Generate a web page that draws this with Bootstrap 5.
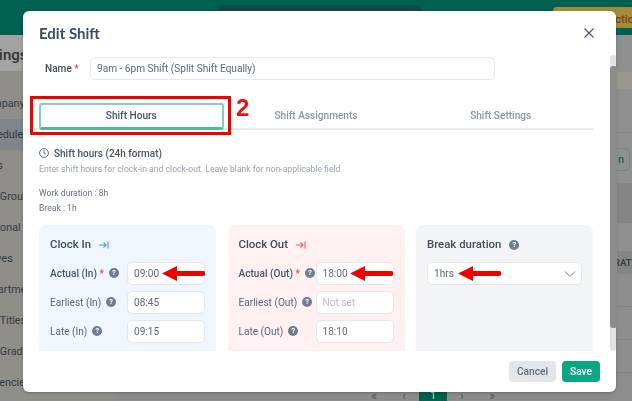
<!DOCTYPE html>
<html lang="en">
<head>
  <meta charset="UTF-8" />
  <meta name="viewport" content="width=device-width, initial-scale=1" />
  <title>Edit Shift</title>
  <link href="https://cdn.jsdelivr.net/npm/bootstrap@5.3.0/dist/css/bootstrap.min.css" rel="stylesheet">
  <style>
    html, body { height: 100%; overflow: hidden; }
    body { font-family: Roboto, "Liberation Sans", sans-serif; background: #8e8e8c; color: #3f4d5f; font-size: 10.1px; }

    /* page behind the modal */
    .page-wrap { width: 632px; height: 401px; overflow: hidden; }
    .top-bar { height: 35px; background: #00604f; padding-top: 7px; }
    .top-pill { width: 206px; height: 14px; margin-top: -2px; margin-left: 216px; background: #104a45; border-radius: 8px 8px 0 0; }
    .top-gold { width: 90px; height: 21px; background: #a28a3a; color: #8a3f10; font-size: 11.5px; font-weight: 500; border-radius: 4px 0 0 0; padding: 4px 0 0 62px; margin-left: 553px; margin-top: -12px; white-space: nowrap; overflow: hidden; }
    .page-body { height: 366px; }
    .side-col { width: 116px; background: #908e89; flex: none; overflow: hidden; }
    .side-head { height: 36px; background: #a3a3a3; font-size: 15px; font-weight: 500; color: #333; padding: 9px 0 0 0; margin-bottom: 17px; margin-left: -28px; width: 160px; white-space: nowrap; }
    .side-item { height: 31px; line-height: 31px; white-space: nowrap; font-size: 10.8px; color: #333b44; margin-left: -21px; width: 140px; padding-left: 0; }
    .side-item.sel { background: #7f858a; }
    .main-col { background: #8c8c8c; min-width: 0; color: #2f3a40; }
    .band-a { height: 37px; background: #8f8f8f; }
    .band-b { height: 17px; background: #9a9690; }
    .band-c { height: 44px; background: #8f8f8f; border-bottom: 1px solid #838383; }
    .band-d { height: 50px; background: #8f8f8f; padding: 15px 2px 0 0; }
    .outline-pill { width: 26px; height: 23px; border: 1px solid #5f9186; border-radius: 5px; margin-left: 488px; color: #1f5f52; font-weight: 500; font-size: 11px; text-align: left; padding-left: 13px; line-height: 21px; }
    .band-e { height: 40px; background: #858585; }
    .band-f { height: 28px; background: #8f8f8f; }
    .band-g { height: 23px; background: #858585; font-size: 9.5px; font-weight: 500; line-height: 23px; padding-left: 498px; white-space: nowrap; overflow: hidden; }
    .band-row { height: 33px; background: #8e8e8e; border-bottom: 1px solid #828282; }
    .pager { height: 10px; padding-left: 243px; color: #555; font-size: 13px; line-height: 9px; margin-top: 18px; }
    .pager span { width: 30px; text-align: center; }
    .pager .pager-on { width: 28px; background: #00604f; color: #9fb; font-size: 10px; }

    /* modal */
    .modal-holder { position: fixed; left: 23px; top: 11px; width: 593px; z-index: 10; }
    .shift-modal { height: 381px; border: 0; border-radius: 6px; background: #fff; position: relative; box-shadow: 0 1px 3px rgba(0,0,0,.25); }
    .shift-modal .modal-header { height: 43px; padding: 0 16px; border: 0; }
    .shift-title { font-family: Lato, "Liberation Sans", sans-serif; font-weight: 700; font-size: 15px; color: #3a4a5f; margin: 0; }
    .close-x { width: 10px; height: 10px; margin-right: 6px; margin-top: 0; }
    .shift-body { height: 297px; flex: none; overflow: hidden; padding: 3px 23px 0 16px; }
    .name-label { width: 51px; padding-left: 6px; font-weight: 500; font-size: 10.1px; color: #3f4d5f; flex: none; }
    .req { color: #e5484d; }
    .mini-input.form-control, .mini-input.form-select { height: 23px; min-height: 23px; font-size: 10.1px; padding: 0 6px; color: #5c6878; border: 1px solid #e6e8ec; border-radius: 5px; background-color: #fff; }
    .mini-input.form-select { background-image: url("data:image/svg+xml,%3csvg xmlns='http://www.w3.org/2000/svg' viewBox='0 0 12 6'%3e%3cpath fill='none' stroke='%236b7685' stroke-width='1' d='M1 .5l5 5 5-5'/%3e%3c/svg%3e"); background-size: 12px 6px; background-position: right 5px center; }
    .mini-input.form-control::placeholder { color: #b8bec7; }
    .name-box { width: 405px; flex: none; }
    .tab-wrap { margin-top: 23px; position: relative; }
    .shift-tabs { border-bottom: 2px solid #e8eaee; height: 27px; }
    .shift-tabs .nav-link { height: 27px; padding: 0; line-height: 25px; font-size: 10.1px; font-weight: 500; color: #8a95a5; border: 0; background: none; }
    .shift-tabs .nav-link.active { color: #46556a; border: 2px solid #7fd1bd; border-bottom: 3px solid #4fb79f; border-radius: 3px; background: #fff; line-height: 22px; }
    .red-box { position: absolute; left: -9px; top: -7px; width: 201px; height: 39px; border: 3px solid #f00000; pointer-events: none; }
    .red-two { position: absolute; left: 197px; top: -9px; color: #ee1111; font-family: "Liberation Sans", sans-serif; font-size: 24px; font-weight: 700; line-height: 28px; }
    .hours-head { margin-top: 16px; font-weight: 500; font-size: 10px; color: #46556a; gap: 5px; height: 14px; }
    .hours-sub { margin-top: 2px; font-size: 8.65px; color: #98a1ae; line-height: 14px; }
    .dur-line { font-size: 8.6px; color: #66717f; line-height: 15px; }
    .dur-first { margin-top: 10px; }
    .hour-cards { margin-top: 9px; display: grid; grid-template-columns: 177px 177px 177px; gap: 11.5px; }
    .hour-card { height: 140px; border-radius: 8px; padding: 12px 11px; }
    .card-in { background: #eff6fe; }
    .card-out { background: #fff0f2; }
    .card-brk { background: #f3f4f6; }
    .hour-head { height: 16px; font-size: 11.4px; font-weight: 500; color: #3f4d5f; gap: 8px; margin-bottom: 9px; }
    .hour-row { height: 23px; margin-bottom: 6px; font-size: 10.1px; color: #5a6678; justify-content: space-between; }
    .hour-row .strong-lab { font-weight: 500; color: #46556a; }
    .hour-lab { gap: 5px; white-space: nowrap; }
    .time-box { width: 78px; flex: none; position: relative; }
    .help-dot { display: inline-block; width: 10px; height: 10px; border-radius: 50%; background: #6f7d90; color: #fff; font-size: 7.5px; font-weight: 700; line-height: 10px; text-align: center; flex: none; }
    .red-arrow { position: absolute; top: 4px; width: 43px; height: 15px; }
    .shift-foot { height: 41px; padding: 0 16px 0 0; border: 0; gap: 6px; margin-top: 0; }
    .btn-cancel.btn { height: 21px; width: 47px; padding: 0; font-size: 10.2px; font-weight: 500; background: #e2e5e9; color: #5f6b7a; border: 0; border-radius: 4px; margin: 0; }
    .btn-save.btn { height: 21px; width: 38px; padding: 0; font-size: 10.2px; font-weight: 500; background: #0aa683; color: #fff; border: 0; border-radius: 4px; margin: 0; }
    .scroll-track { position: absolute; right: 0; top: 44px; width: 6px; height: 296px; background: #e3e3e3; border-radius: 3px; }
    .scroll-thumb { position: absolute; left: 587px; top: 55px; width: 7px; height: 262px; background: #8c8c8c; border-radius: 3px; }
  </style>
</head>
<body>

  <!-- page behind the modal -->
  <div class="page-wrap">
    <div class="top-bar">
      <div class="top-pill"></div>
      <div class="top-gold">ction</div>
    </div>
    <div class="page-body d-flex">
      <div class="side-col">
        <div class="side-head">Settings</div>
        <div class="side-item">Company</div>
        <div class="side-item sel">Schedules</div>
        <div class="side-item">Sites</div>
        <div class="side-item">Job Groups</div>
        <div class="side-item">Regional</div>
        <div class="side-item">Leaves</div>
        <div class="side-item">Departments</div>
        <div class="side-item">Job Titles</div>
        <div class="side-item">Job Grades</div>
        <div class="side-item">Currencies</div>
      </div>
      <div class="main-col flex-grow-1">
        <div class="band-a"></div>
        <div class="band-b"></div>
        <div class="band-c"></div>
        <div class="band-d"><div class="outline-pill">n</div></div>
        <div class="band-e"></div>
        <div class="band-f"></div>
        <div class="band-g">RATI</div>
        <div class="band-row"></div>
        <div class="band-row"></div>
        <div class="band-row"></div>
        <div class="pager d-flex">
          <span>&laquo;</span><span>&lsaquo;</span><span class="pager-on">1</span><span>&rsaquo;</span><span>&raquo;</span>
        </div>
      </div>
    </div>
  </div>

  <!-- modal -->
  <div class="modal-holder">
    <div class="modal-content shift-modal">
      <div class="modal-header justify-content-between">
        <h5 class="shift-title">Edit Shift</h5>
        <svg class="close-x" viewBox="0 0 10 10"><path d="M.5.5l9 9M9.5.5l-9 9" stroke="#46556a" stroke-width="1.1" fill="none"/></svg>
      </div>

      <div class="modal-body shift-body">
        <div class="d-flex align-items-center">
          <label class="name-label">Name <span class="req">*</span></label>
          <input class="form-control mini-input name-box" value="9am - 6pm Shift (Split Shift Equally)">
        </div>

        <div class="tab-wrap">
          <ul class="nav nav-justified shift-tabs">
            <li class="nav-item"><a class="nav-link active" href="#">Shift Hours</a></li>
            <li class="nav-item"><a class="nav-link" href="#">Shift Assignments</a></li>
            <li class="nav-item"><a class="nav-link" href="#">Shift Settings</a></li>
          </ul>
          <div class="red-box"></div>
          <div class="red-two">2</div>
        </div>

        <div class="hours-head d-flex align-items-center">
          <svg width="10" height="10" viewBox="0 0 10 10"><circle cx="5" cy="5" r="4.4" fill="none" stroke="#46556a" stroke-width=".9"/><path d="M5 2.4V5l1.8 1" fill="none" stroke="#46556a" stroke-width=".9"/></svg>
          Shift hours (24h format)
        </div>
        <div class="hours-sub">Enter shift hours for clock-in and clock-out. Leave blank for non-applicable field</div>
        <div class="dur-line dur-first">Work duration : 8h</div>
        <div class="dur-line">Break : 1h</div>

        <div class="hour-cards">
          <div class="hour-card card-in">
            <div class="hour-head d-flex align-items-center">Clock In
              <svg width="10" height="10" viewBox="0 0 10 10"><path d="M0 5h7M4.5 2.5L7 5 4.5 7.5M9 1.5v7" fill="none" stroke="#4a9cf0" stroke-width="1.1"/></svg>
            </div>
            <div class="hour-row d-flex align-items-center">
              <span class="hour-lab d-flex align-items-center"><span class="strong-lab">Actual (In) <span class="req">*</span></span><span class="help-dot">?</span></span>
              <div class="time-box">
                <input class="form-control mini-input" value="09:00">
                <svg class="red-arrow" style="left:35px" viewBox="0 0 43 15"><path d="M0 7.5L15 0v5h26a2.5 2.5 0 010 5H15v5z" fill="#f00000"/></svg>
              </div>
            </div>
            <div class="hour-row d-flex align-items-center">
              <span class="hour-lab d-flex align-items-center">Earliest (In)<span class="help-dot">?</span></span>
              <div class="time-box"><input class="form-control mini-input" value="08:45"></div>
            </div>
            <div class="hour-row d-flex align-items-center">
              <span class="hour-lab d-flex align-items-center">Late (In)<span class="help-dot">?</span></span>
              <div class="time-box"><input class="form-control mini-input" value="09:15"></div>
            </div>
          </div>

          <div class="hour-card card-out">
            <div class="hour-head d-flex align-items-center">Clock Out
              <svg width="10" height="10" viewBox="0 0 10 10"><path d="M0 5h7M4.5 2.5L7 5 4.5 7.5M9 1.5v7" fill="none" stroke="#f0566e" stroke-width="1.1"/></svg>
            </div>
            <div class="hour-row d-flex align-items-center">
              <span class="hour-lab d-flex align-items-center"><span class="strong-lab">Actual (Out) <span class="req">*</span></span><span class="help-dot">?</span></span>
              <div class="time-box">
                <input class="form-control mini-input" value="18:00">
                <svg class="red-arrow" style="left:34px" viewBox="0 0 43 15"><path d="M0 7.5L15 0v5h26a2.5 2.5 0 010 5H15v5z" fill="#f00000"/></svg>
              </div>
            </div>
            <div class="hour-row d-flex align-items-center">
              <span class="hour-lab d-flex align-items-center">Earliest (Out)<span class="help-dot">?</span></span>
              <div class="time-box"><input class="form-control mini-input" placeholder="Not set"></div>
            </div>
            <div class="hour-row d-flex align-items-center">
              <span class="hour-lab d-flex align-items-center">Late (Out)<span class="help-dot">?</span></span>
              <div class="time-box"><input class="form-control mini-input" value="18:10"></div>
            </div>
          </div>

          <div class="hour-card card-brk">
            <div class="hour-head d-flex align-items-center">Break duration <span class="help-dot">?</span></div>
            <div class="position-relative">
              <select class="form-select mini-input"><option>1hrs</option></select>
              <svg class="red-arrow" style="left:31px" viewBox="0 0 43 15"><path d="M0 7.5L15 0v5h26a2.5 2.5 0 010 5H15v5z" fill="#f00000"/></svg>
            </div>
          </div>
        </div>
      </div>

      <div class="modal-footer shift-foot align-items-center justify-content-end">
        <button class="btn btn-cancel">Cancel</button>
        <button class="btn btn-save">Save</button>
      </div>

      <div class="scroll-track"></div>
      <div class="scroll-thumb"></div>
    </div>
  </div>

  <script src="https://cdn.jsdelivr.net/npm/bootstrap@5.3.0/dist/js/bootstrap.bundle.min.js"></script>
</body>
</html>
